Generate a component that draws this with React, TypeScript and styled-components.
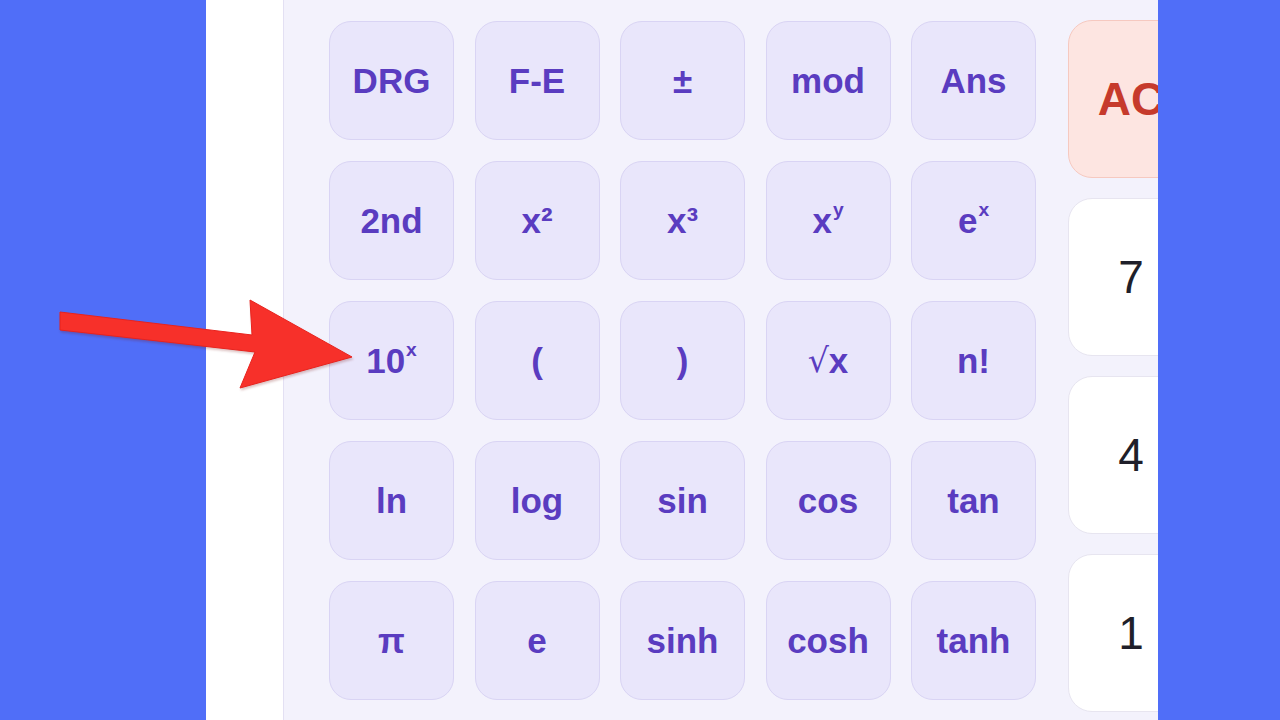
import React from 'react';
import styled, { createGlobalStyle } from 'styled-components';

const GlobalStyle = createGlobalStyle`
  html, body {
    margin: 0;
    padding: 0;
  }
  body {
    font-family: "Liberation Sans", Arial, sans-serif;
    background-color: #506ef8;
  }
`;

const Sup = styled.span`
  font-size: 0.55em;
  position: relative;
  top: -0.55em;
  margin-left: 1px;
`;

const Root = styled.span`
  font-family: "DejaVu Sans", sans-serif;
  font-weight: normal;
  font-size: 0.95em;
`;

type SciKey = {
  label: React.ReactNode;
  id: string;
};

const sciKeys: SciKey[] = [
  { id: 'drg', label: 'DRG' },
  { id: 'fe', label: 'F-E' },
  { id: 'pm', label: '±' },
  { id: 'mod', label: 'mod' },
  { id: 'ans', label: 'Ans' },
  { id: '2nd', label: '2nd' },
  { id: 'x2', label: 'x²' },
  { id: 'x3', label: 'x³' },
  { id: 'xy', label: <>x<Sup>y</Sup></> },
  { id: 'ex', label: <>e<Sup>x</Sup></> },
  { id: '10x', label: <>10<Sup>x</Sup></> },
  { id: 'lp', label: '(' },
  { id: 'rp', label: ')' },
  { id: 'sqrt', label: <><Root>√</Root>x</> },
  { id: 'fact', label: 'n!' },
  { id: 'ln', label: 'ln' },
  { id: 'log', label: 'log' },
  { id: 'sin', label: 'sin' },
  { id: 'cos', label: 'cos' },
  { id: 'tan', label: 'tan' },
  { id: 'pi', label: 'π' },
  { id: 'e', label: 'e' },
  { id: 'sinh', label: 'sinh' },
  { id: 'cosh', label: 'cosh' },
  { id: 'tanh', label: 'tanh' },
];

const padKeys = ['AC', '7', '4', '1'];

const App = () => {
  return (
    <>
      <GlobalStyle />
      <Page>
        <Sheet>
          <Panel>
            <SciGrid>
              {sciKeys.map((key) => (
                <SciButton key={key.id}>{key.label}</SciButton>
              ))}
            </SciGrid>
            <NumPad>
              {padKeys.map((key) => (
                <PadButton key={key} $clear={key === 'AC'}>
                  {key}
                </PadButton>
              ))}
            </NumPad>
          </Panel>
        </Sheet>
        <Arrow viewBox="0 0 1280 720" aria-hidden>
          <polygon
            points="60,312 252,335 250,300 352,357 240,388 255,352 60,330"
            fill="#f7302a"
            stroke="#e8221d"
            strokeWidth="1"
            strokeLinejoin="round"
          />
        </Arrow>
      </Page>
    </>
  );
};

const Page = styled.div`
  position: relative;
  width: 1280px;
  height: 720px;
  overflow: hidden;
  background-color: #506ef8;
`;

const Sheet = styled.div`
  width: 875px;
  height: 720px;
  margin-left: 206px;
  padding-left: 77px;
  background-color: #ffffff;
  overflow: hidden;
`;

const Panel = styled.div`
  display: flex;
  align-items: flex-start;
  gap: 32px;
  height: 100%;
  padding: 20px 0 0 45px;
  background-color: #f3f2fc;
  border-left: 1.5px solid #e3e0f3;
`;

const SciGrid = styled.div`
  display: grid;
  grid-template-columns: repeat(5, 125px);
  grid-auto-rows: 119px;
  column-gap: 20.5px;
  row-gap: 21px;
  margin-top: 1px;
  flex-shrink: 0;
`;

const SciButton = styled.button`
  display: flex;
  align-items: center;
  justify-content: center;
  padding: 0;
  background-color: #e9e6fb;
  border: 1.5px solid #d9d4f4;
  border-radius: 22px;
  color: #5a3cc0;
  font-family: "Liberation Sans", Arial, sans-serif;
  font-size: 35px;
  font-weight: bold;
  line-height: 1;
  cursor: pointer;
`;

const NumPad = styled.div`
  display: grid;
  grid-template-columns: 126px;
  grid-auto-rows: 158px;
  row-gap: 20px;
  flex-shrink: 0;
`;

const PadButton = styled.button<{ $clear?: boolean }>`
  display: flex;
  align-items: center;
  justify-content: center;
  padding: 0;
  background-color: ${(p) => (p.$clear ? '#fde5e1' : '#ffffff')};
  border: 1.5px solid ${(p) => (p.$clear ? '#f6c9c0' : '#e7e5f0')};
  border-radius: 24px;
  color: ${(p) => (p.$clear ? '#c63a2c' : '#1f1f2a')};
  font-family: "Liberation Sans", Arial, sans-serif;
  font-size: 46px;
  font-weight: ${(p) => (p.$clear ? 'bold' : 'normal')};
  line-height: 1;
  cursor: pointer;
`;

const Arrow = styled.svg`
  position: absolute;
  left: 0;
  top: 0;
  width: 1280px;
  height: 720px;
  pointer-events: none;
  filter: drop-shadow(1px 2px 1px rgba(120, 20, 20, 0.25));
`;

export default App;
